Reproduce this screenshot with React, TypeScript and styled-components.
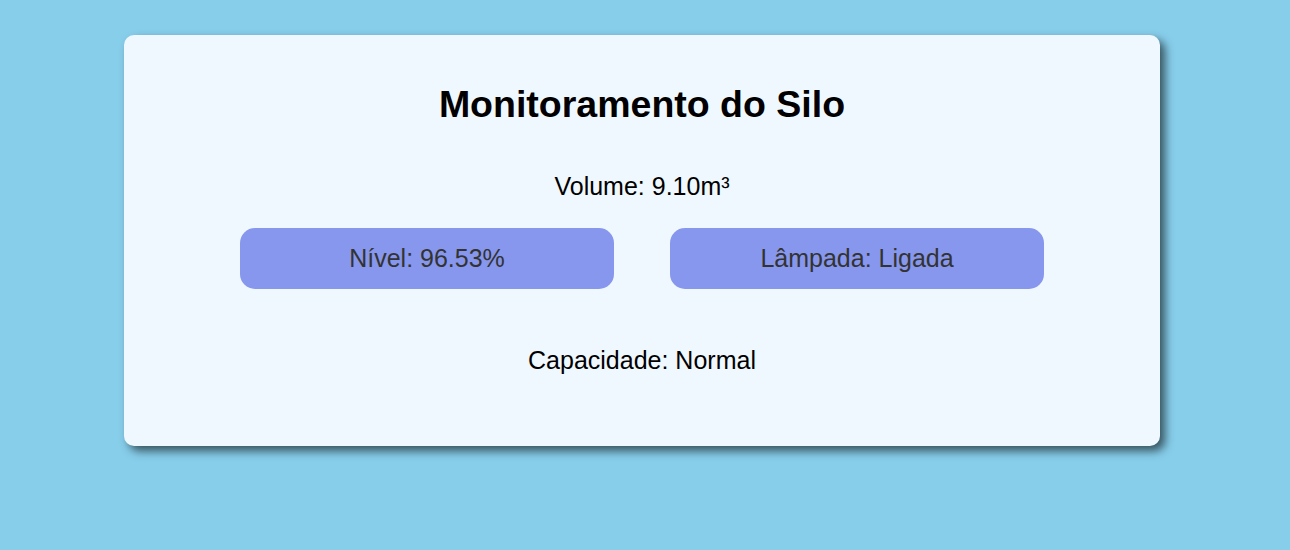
import React from "react";
import styled, { createGlobalStyle } from "styled-components";

const Global = createGlobalStyle`
  html, body { margin: 0; padding: 0; }
  body {
    background: #87ceeb;
    font-family: "Liberation Sans", Arial, sans-serif;
    height: 550px;
    overflow: hidden;
  }
`;

const Page = styled.div`
  padding: 35px 130px 0 124px;
`;

const Card = styled.div`
  background: #f0f8ff;
  border-radius: 10px;
  box-shadow: 5px 5px 10px rgba(0, 0, 0, 0.6);
  height: 411px;
  box-sizing: border-box;
  padding: 48px 0 0;
  display: flex;
  flex-direction: column;
  align-items: center;
`;

const Title = styled.h1`
  margin: 0;
  font-size: 37.5px;
  font-weight: bold;
  line-height: 43px;
  color: #000;
`;

const Info = styled.p<{ $top: number }>`
  margin: ${(p) => p.$top}px 0 0;
  font-size: 25px;
  line-height: 29px;
  color: #000;
`;

const Row = styled.div`
  display: flex;
  gap: 56px;
  margin-top: 27px;
`;

const Pill = styled.div`
  width: 374px;
  height: 61px;
  border-radius: 15px;
  background: #8797ee;
  color: #333;
  font-size: 25px;
  display: flex;
  align-items: center;
  justify-content: center;
`;

export default function App() {
  return (
    <>
      <Global />
      <Page>
        <Card>
          <Title>Monitoramento do Silo</Title>
          <Info $top={46}>Volume: 9.10m³</Info>
          <Row>
            <Pill>Nível: 96.53%</Pill>
            <Pill>Lâmpada: Ligada</Pill>
          </Row>
          <Info $top={57}>Capacidade: Normal</Info>
        </Card>
      </Page>
    </>
  );
}
